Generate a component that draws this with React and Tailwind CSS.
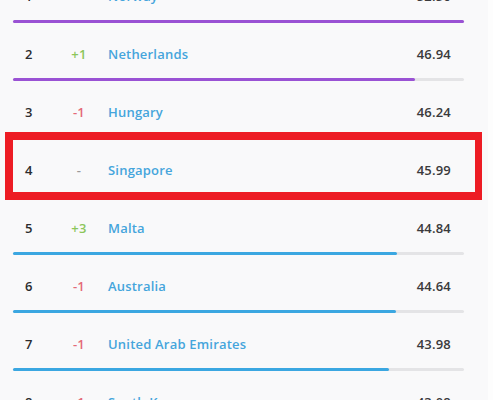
import React from "react";

const rows = [
  { rank: 1, change: "-", country: "Norway", score: "52.56", pct: 100, color: "bg-[#9a52d4]" },
  { rank: 2, change: "+1", country: "Netherlands", score: "46.94", pct: 89.2, color: "bg-[#9a52d4]" },
  { rank: 3, change: "-1", country: "Hungary", score: "46.24", pct: 88, color: "bg-[#9a52d4]" },
  { rank: 4, change: "-", country: "Singapore", score: "45.99", pct: 87, color: "bg-[#3ba7e1]" },
  { rank: 5, change: "+3", country: "Malta", score: "44.84", pct: 85.2, color: "bg-[#3ba7e1]" },
  { rank: 6, change: "-1", country: "Australia", score: "44.64", pct: 84.9, color: "bg-[#3ba7e1]" },
  { rank: 7, change: "-1", country: "United Arab Emirates", score: "43.98", pct: 83.4, color: "bg-[#3ba7e1]" },
  { rank: 8, change: "-1", country: "South Korea", score: "43.08", pct: 82, color: "bg-[#3ba7e1]" },
];

const changeColor = (c) => {
  if (c.startsWith("+")) return "text-[#8cc65a]";
  if (c === "-") return "text-[#9a9a9a]";
  return "text-[#e46a78]";
};

const Row = ({ row }) => (
  <div>
    <div className="flex items-center pt-[23px] pb-[16px] pl-[12px] pr-[13px] leading-[16px] text-[13px] font-semibold tracking-[0.2px]">
      <span className="w-[42px] text-[#2c2c2e]">{row.rank}</span>
      <span className={`w-[24px] text-center ${changeColor(row.change)}`}>{row.change}</span>
      <span className="flex-1 pl-[17px] text-[#45a5dc]">{row.country}</span>
      <span className="text-[#3a3a3c]">{row.score}</span>
    </div>
    <div className="h-[3px] rounded-full bg-[#e4e4e6]">
      <div className={`h-[3px] rounded-full ${row.color}`} style={{ width: `${row.pct}%` }} />
    </div>
  </div>
);

export default function App() {
  return (
    <div
      className="relative h-[400px] w-[493px] overflow-hidden bg-[#f9f9fa]"
      style={{ fontFamily: '"Open Sans", "Liberation Sans", sans-serif' }}
    >
      <div className="flex">
        <div className="mt-[-35px] w-[488px] pl-[13px] pr-[24px]">
          {rows.map((row) => (
            <Row key={row.rank} row={row} />
          ))}
        </div>
        <div className="h-[400px] flex-1 bg-[#fdfdfd]" />
      </div>

      {/* highlight box */}
      <div className="absolute left-[5px] top-[132px] h-[68px] w-[477px] border-8 border-r-[7px] border-[#ed1c24]" />
    </div>
  );
}
